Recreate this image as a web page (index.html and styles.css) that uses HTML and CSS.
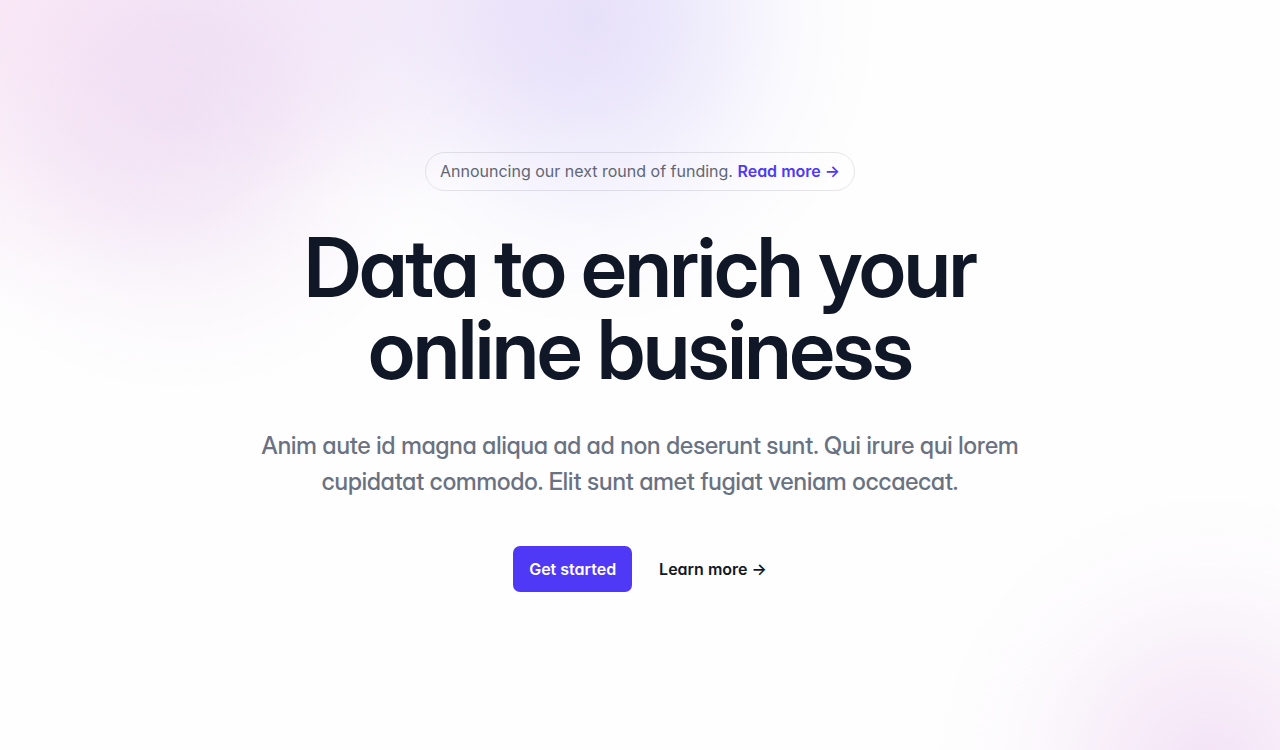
FILE: index.html
```html
<!DOCTYPE html>
<html lang="en">
<head>
<meta charset="utf-8">
<title>Data to enrich your online business</title>
<link rel="stylesheet" href="styles.css">
</head>
<body>
<main class="hero">
  <div class="announcement">Announcing our next round of funding. <a class="announcement-link" href="#">Read more <span aria-hidden="true">→</span></a></div>
  <h1 class="title">Data to enrich your online business</h1>
  <p class="lead">Anim aute id magna aliqua ad ad non deserunt sunt. Qui irure qui lorem cupidatat commodo. Elit sunt amet fugiat veniam occaecat.</p>
  <div class="actions">
    <button class="button" type="button">Get started</button>
    <a class="more" href="#">Learn more <span aria-hidden="true">→</span></a>
  </div>
</main>
</body>
</html>
```
FILE: styles.css
```css
* { box-sizing: border-box; }
body {
  margin: 0;
  min-height: 100vh;
  display: flex;
  justify-content: center;
  font-family: Inter, "Liberation Sans", sans-serif;
  font-size: 16px;
  font-feature-settings: "cv11";
  color: #101828;
  background:
    radial-gradient(ellipse 270px 280px at 180px 115px, rgba(228, 200, 236, 0.46), rgba(228, 200, 236, 0.34) 35%, rgba(228, 200, 236, 0.1) 70%, transparent),
    radial-gradient(ellipse 320px 340px at 0 0, rgba(247, 216, 240, 0.56), rgba(247, 216, 240, 0.32) 40%, rgba(247, 216, 240, 0.07) 80%, transparent),
    radial-gradient(ellipse 320px 200px at 350px 0, rgba(232, 212, 244, 0.42), rgba(232, 212, 244, 0.26) 45%, transparent),
    radial-gradient(ellipse 290px 310px at 590px 20px, rgba(216, 208, 248, 0.62), rgba(216, 208, 248, 0.46) 30%, rgba(216, 208, 248, 0.1) 70%, transparent),
    radial-gradient(ellipse 280px 280px at calc(100% - 70px) calc(100% + 20px), rgba(238, 214, 242, 0.7), rgba(238, 214, 242, 0.42) 33%, rgba(238, 214, 242, 0.1) 70%, transparent),
    #fefefe;
}
a { text-decoration: none; }
.hero {
  width: 100%;
  max-width: 804px;
  padding: 152px 16px;
  display: flex;
  flex-direction: column;
  align-items: center;
  text-align: center;
}
.announcement {
  padding: 5px 14px;
  border: 1px solid rgba(16, 24, 40, 0.1);
  border-radius: 20px;
  line-height: 27px;
  color: #5f6675;
}
.announcement-link { color: #4f39f6; font-weight: 600; }
.title {
  margin: 36px 0 0;
  font-family: "Inter Display", Inter, "Liberation Sans", sans-serif;
  font-size: 82px;
  line-height: 82px;
  font-weight: 600;
  letter-spacing: -2px;
}
.lead {
  margin: 37px 0 0;
  font-family: "Inter Display", Inter, "Liberation Sans", sans-serif;
  font-size: 24px;
  line-height: 36px;
  font-weight: 500;
  color: #6a7282;
}
.actions {
  margin-top: 46px;
  display: flex;
  align-items: center;
  gap: 27px;
}
.button {
  padding: 9px 16px;
  border: 0;
  border-radius: 7px;
  background: #4f39f6;
  color: #fff;
  font: inherit;
  font-weight: 600;
  font-feature-settings: inherit;
  line-height: 28px;
}
.more { color: #101828; font-weight: 600; line-height: 28px; }
```
